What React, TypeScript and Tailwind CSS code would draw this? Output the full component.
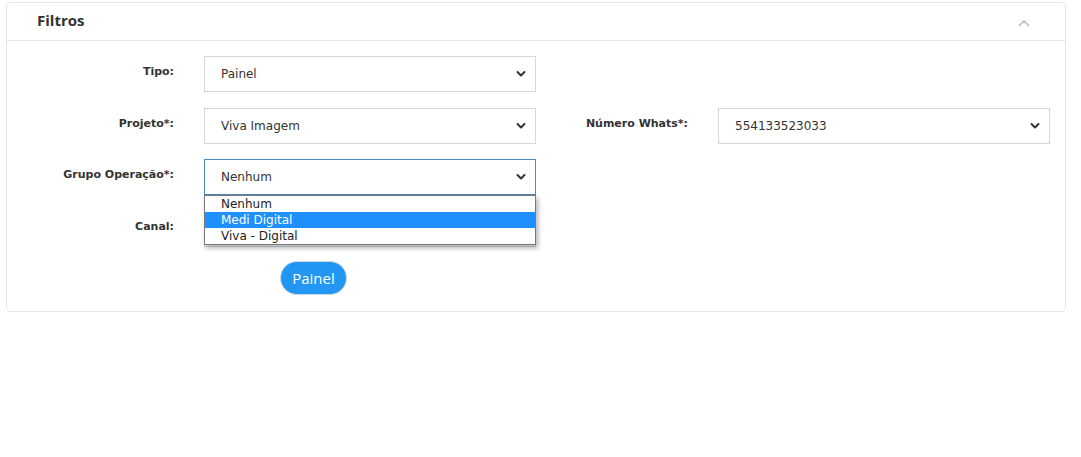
import React from "react";

const Chevron = () => (
  <svg width="10" height="7" viewBox="0 0 10 7" className="absolute right-[9px] top-1/2 -translate-y-1/2">
    <path d="M1.5 1.5 L5 5 L8.5 1.5" fill="none" stroke="#333" strokeWidth="2" strokeLinecap="round" strokeLinejoin="round" />
  </svg>
);

const Select = ({ value, focused = false }: { value: string; focused?: boolean }) => (
  <div
    className={`relative h-[36px] w-[332px] border bg-white flex items-center pl-[16px] text-[12px] text-[#333] ${
      focused ? "border-[#4f8ab8]" : "border-[#d4d6df]"
    }`}
  >
    <span>{value}</span>
    <Chevron />
  </div>
);

const Label = ({ children, w }: { children: React.ReactNode; w: string }) => (
  <div className={`${w} text-right pt-[8px] text-[11px] font-bold text-[#333]`}>{children}</div>
);

export default function App() {
  return (
    <div className="w-[1081px] h-[457px] bg-white pt-[2px] px-[6px]" style={{ fontFamily: '"DejaVu Sans", Verdana, sans-serif' }}>
      <div className="w-[1060px] h-[310px] border border-[#e6e6e6] rounded-[4px]">
        <div className="h-[38px] border-b border-[#e6e6e6] flex items-center justify-between pl-[30px] pr-[35px]">
          <span className="text-[15px] font-bold text-[#333] -mt-[3px]" style={{ fontFamily: '"Open Sans", sans-serif' }}>
            Filtros
          </span>
          <svg width="12" height="8" viewBox="0 0 12 8" className="mt-[2px]">
            <path d="M1.5 6.5 L6 2 L10.5 6.5" fill="none" stroke="#c8c8c8" strokeWidth="2" strokeLinecap="round" strokeLinejoin="round" />
          </svg>
        </div>
        <div className="pt-[15px] flex flex-col gap-[16px]">
          <div className="flex">
            <Label w="w-[167px]">Tipo:</Label>
            <div className="ml-[30px]">
              <Select value="Painel" />
            </div>
          </div>
          <div className="flex">
            <Label w="w-[167px]">Projeto*:</Label>
            <div className="ml-[30px]">
              <Select value="Viva Imagem" />
            </div>
            <Label w="w-[152px]">Número Whats*:</Label>
            <div className="ml-[30px]">
              <Select value="554133523033" />
            </div>
          </div>
          <div className="flex -mt-[1px]">
            <Label w="w-[167px]">Grupo Operação*:</Label>
            <div className="ml-[30px] relative z-10">
              <Select value="Nenhum" focused />
              <div className="absolute left-0 top-[36px] w-[332px] bg-white border border-[#7a7a7a] shadow-[2px_3px_5px_rgba(0,0,0,0.3)] text-[12px] text-[#222] leading-[16px]">
                <div className="pl-[16px] h-[16px]">Nenhum</div>
                <div className="pl-[16px] h-[16px] bg-[#1e90ff] text-white">Medi Digital</div>
                <div className="pl-[16px] h-[16px]">Viva - Digital</div>
              </div>
            </div>
          </div>
          <div className="flex">
            <Label w="w-[167px]">Canal:</Label>
            <div className="ml-[30px]">
              <Select value="" />
            </div>
          </div>
          <div className="flex pl-[273px] -mt-[2px]">
            <button className="h-[34px] w-[67px] rounded-full bg-[#2196f3] border border-[#cfd8e0] text-white text-[15px]" style={{ fontFamily: '"Open Sans", sans-serif' }}>
              Painel
            </button>
          </div>
        </div>
      </div>
    </div>
  );
}
